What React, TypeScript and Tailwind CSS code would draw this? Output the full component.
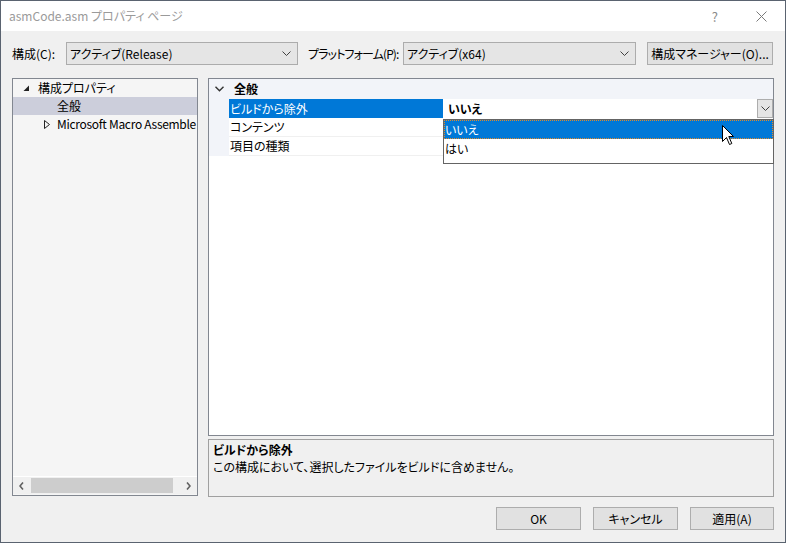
import React from "react";

const FONT = {
  fontFamily: "'Noto Sans CJK JP', 'Noto Sans', sans-serif",
};

function Chevron({ className = "" }: { className?: string }) {
  return (
    <svg width="9" height="5" viewBox="0 0 9 5" className={`shrink-0 ${className}`}>
      <path d="M0.5 0.5 L4.5 4.5 L8.5 0.5" fill="none" stroke="#404040" strokeWidth="1" />
    </svg>
  );
}

function Combo({ text, w }: { text: string; w: string }) {
  return (
    <div className={`${w} h-[23px] border border-[#acacac] bg-[#e5e5e5] flex items-center justify-between pl-[3px] pr-[6px] shrink-0`}>
      <span className="leading-none whitespace-nowrap">{text}</span>
      <Chevron />
    </div>
  );
}

function Btn({ children, w }: { children: React.ReactNode; w: string }) {
  return (
    <div className={`${w} h-[23px] border border-[#adadad] bg-[#e1e1e1] flex items-center justify-center whitespace-nowrap shrink-0`}>
      {children}
    </div>
  );
}

export default function App() {
  return (
    <div
      className="relative w-[786px] h-[543px] border border-[#5a6370] bg-[#f0f0f0] flex flex-col text-[12px] text-black [font-feature-settings:'palt'] leading-none"
      style={FONT}
    >
      {/* Title bar */}
      <div className="h-[30px] bg-white flex items-center pl-[8px] shrink-0">
        <span className="text-[#9a9a9a] text-[12px]">asmCode.asm プロパティ ページ</span>
        <div className="flex-1" />
        <span className="text-[#8a8a8a] text-[13px] mr-[38px]">?</span>
        <svg width="11" height="11" viewBox="0 0 11 11" className="mr-[18px] shrink-0">
          <path d="M0.5 0.5 L10.5 10.5 M10.5 0.5 L0.5 10.5" stroke="#7a7a7a" strokeWidth="1" />
        </svg>
      </div>

      {/* Body */}
      <div className="flex-1 flex flex-col px-[11px] pt-[11px] pb-[12px]">
        {/* Row 1 */}
        <div className="flex items-center h-[23px] shrink-0">
          <span className="w-[54px] whitespace-nowrap shrink-0">構成(C):</span>
          <Combo text="アクティブ(Release)" w="w-[232px]" />
          <span className="w-[105px] pl-[10px] whitespace-nowrap shrink-0 tracking-[-0.9px]">プラットフォーム(P):</span>
          <Combo text="アクティブ(x64)" w="w-[233px]" />
          <div className="ml-[11px] shrink-0">
            <Btn w="w-[126px]">構成マネージャー(O)...</Btn>
          </div>
        </div>

        {/* Main area */}
        <div className="mt-[13px] h-[419px] flex gap-[10px] shrink-0">
          {/* Tree panel */}
          <div className="w-[186px] h-[418px] border border-[#828790] bg-[#f5f5f5] flex flex-col overflow-hidden shrink-0">
            <div className="flex-1 flex flex-col">
              <div className="h-[18px] flex items-center whitespace-nowrap">
                <svg width="7" height="7" viewBox="0 0 7 7" className="ml-[10px] mr-[8px] shrink-0">
                  <path d="M6 0.5 L6 6 L0.5 6 Z" fill="#222" />
                </svg>
                <span>構成プロパティ</span>
              </div>
              <div className="h-[18px] flex items-center bg-[#cccedb] whitespace-nowrap">
                <span className="ml-[44px]">全般</span>
              </div>
              <div className="h-[18px] flex items-center whitespace-nowrap overflow-hidden">
                <svg width="6" height="9" viewBox="0 0 6 9" className="ml-[31px] mr-[7px] shrink-0">
                  <path d="M0.5 0.5 L5.5 4.5 L0.5 8.5 Z" fill="none" stroke="#222" strokeWidth="1" />
                </svg>
                <span className="shrink-0 tracking-[-0.3px]">Microsoft Macro Assemble</span>
              </div>
            </div>
            {/* Horizontal scrollbar */}
            <div className="h-[18px] border-t border-white bg-[#f0f0f0] flex items-center mb-[1px]">
              <div className="w-[17px] flex justify-center">
                <svg width="5" height="8" viewBox="0 0 5 8">
                  <path d="M4 0.5 L1 4 L4 7.5" fill="none" stroke="#606060" strokeWidth="1.6" />
                </svg>
              </div>
              <div className="ml-[1px] w-[142px] h-[15px] bg-[#cdcdcd]" />
              <div className="flex-1" />
              <div className="w-[17px] flex justify-center">
                <svg width="5" height="8" viewBox="0 0 5 8">
                  <path d="M1 0.5 L4 4 L1 7.5" fill="none" stroke="#606060" strokeWidth="1.6" />
                </svg>
              </div>
            </div>
          </div>

          {/* Right column */}
          <div className="flex-1 flex flex-col">
            {/* Property grid */}
            <div className="h-[358px] border border-[#828790] bg-white flex flex-col">
              <div className="h-[20px] bg-[#f2f4f9] flex items-center shrink-0">
                <svg width="9" height="6" viewBox="0 0 9 6" className="ml-[6px] mr-[10px] shrink-0">
                  <path d="M0.5 0.8 L4.5 4.8 L8.5 0.8" fill="none" stroke="#333" strokeWidth="1.4" />
                </svg>
                <span className="font-bold">全般</span>
              </div>
              {/* Row: ビルドから除外 */}
              <div className="h-[19px] flex shrink-0">
                <div className="w-[20px] bg-[#f2f4f9]" />
                <div className="w-[214px] bg-[#0078d7] text-white flex items-center pl-[1px]">ビルドから除外</div>
                <div className="flex-1 flex items-center justify-between pl-[5px]">
                  <span className="font-bold">いいえ</span>
                  <div className="w-[16px] h-[19px] border border-[#adadad] bg-[#e5e5e5] flex items-center justify-center">
                    <Chevron />
                  </div>
                </div>
              </div>
              <div className="h-[19px] flex shrink-0">
                <div className="w-[20px] bg-[#f2f4f9]" />
                <div className="flex-1 border-b border-[#f0f0f0] flex items-center pl-[1px]">
                  <span className="w-[214px]">コンテンツ</span>
                </div>
              </div>
              <div className="h-[19px] flex shrink-0">
                <div className="w-[20px] bg-[#f2f4f9]" />
                <div className="flex-1 border-b border-[#f0f0f0] flex items-center pl-[1px]">
                  <span className="w-[214px]">項目の種類</span>
                </div>
              </div>
              <div className="flex-1" />
            </div>

            {/* Description */}
            <div className="mt-[3px] h-[58px] border border-[#a0a0a0] bg-[#f0f0f0] flex flex-col pl-[4px] pt-[4px] gap-[5px]">
              <span className="font-bold">ビルドから除外</span>
              <span>この構成において、選択したファイルをビルドに含めません。</span>
            </div>
          </div>
        </div>

        {/* Buttons */}
        <div className="mt-[10px] h-[23px] flex justify-end gap-[12px] shrink-0">
          <Btn w="w-[85px]">OK</Btn>
          <Btn w="w-[85px]">キャンセル</Btn>
          <Btn w="w-[84px]">適用(A)</Btn>
        </div>
      </div>

      {/* Dropdown list overlay */}
      <div className="absolute left-[442px] top-[118px] w-[331px] h-[45px] border border-[#646464] bg-white flex flex-col">
        <div className="h-[19px] bg-[#0078d7] text-white flex items-center pl-[1px] outline-1 outline-dotted outline-[#e08a2a] -outline-offset-1">
          いいえ
        </div>
        <div className="h-[19px] flex items-center pl-[1px]">はい</div>
      </div>

      {/* Mouse cursor */}
      <svg
        width="13"
        height="21"
        viewBox="0 0 13 21"
        className="absolute left-[721px] top-[124px]"
      >
        <path
          d="M0.5 0.5 L0.5 16.5 L4.5 12.5 L7.5 19.5 L9.8 18.5 L6.8 11.5 L11.5 11.5 Z"
          fill="white"
          stroke="black"
          strokeWidth="1"
          strokeLinejoin="miter"
        />
      </svg>
    </div>
  );
}
